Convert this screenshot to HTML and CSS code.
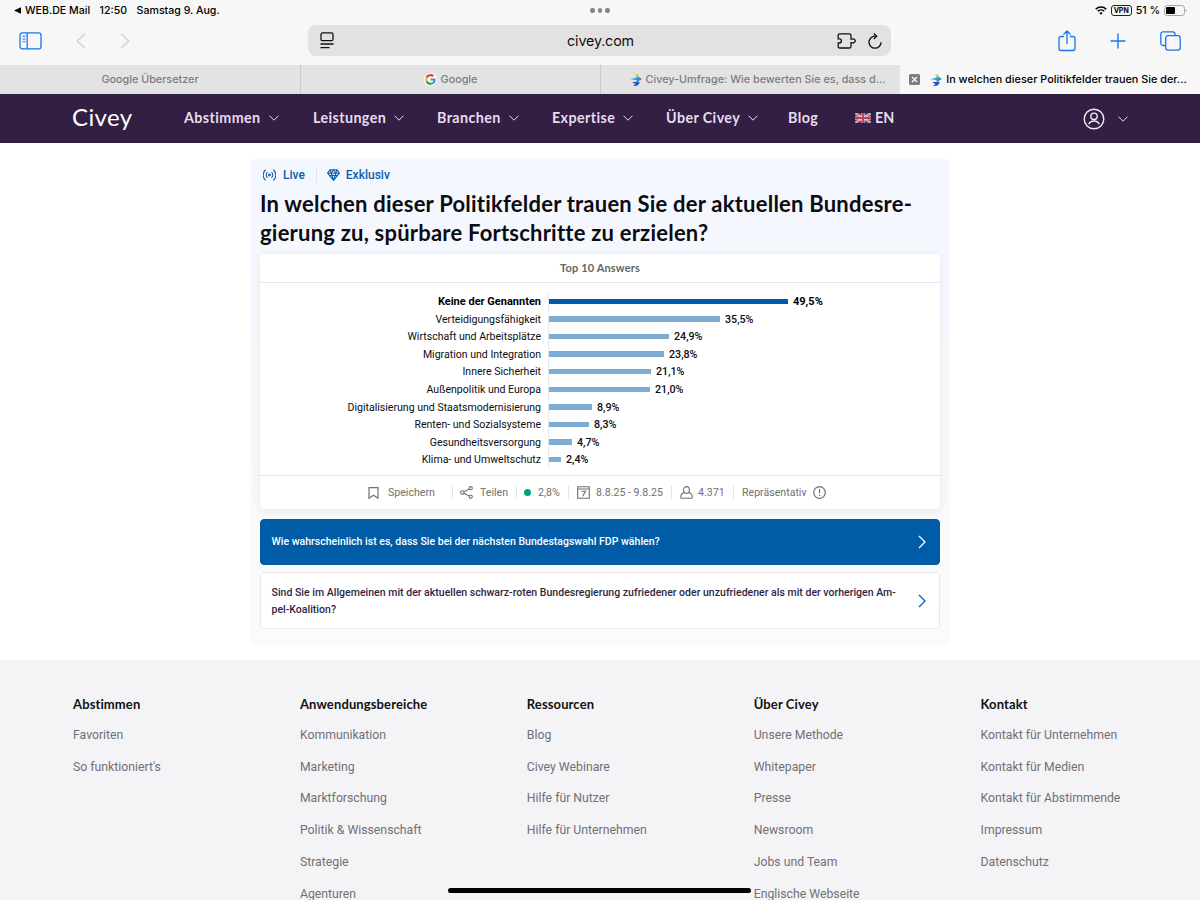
FILE: index.html
```html
<!DOCTYPE html>
<html lang="de">
<head>
    <meta charset="UTF-8">
    <meta name="viewport" content="width=device-width, initial-scale=1.0">
    <title>Civey</title>
    <link rel="stylesheet" href="styles.css">
</head>
<body>
    <svg class="defs" width="0" height="0">
        <defs>
            <linearGradient id="civey-top" x1="0" y1="0" x2="0" y2="1">
                <stop offset="0" stop-color="#f0d54a"/>
                <stop offset="1" stop-color="#6fc3a0"/>
            </linearGradient>
            <linearGradient id="civey-blue" x1="0" y1="0" x2="1" y2="0">
                <stop offset="0" stop-color="#3fc0ee"/>
                <stop offset="1" stop-color="#2a78cf"/>
            </linearGradient>
            <symbol id="chevron" viewBox="0 0 10 6">
                <path d="M.5 .7 5 5.2 9.500 .7" fill="none" stroke="currentColor" stroke-width="1"/>
            </symbol>
            <symbol id="arrow" viewBox="0 0 8 14">
                <path d="M1 1l6 6-6 6" fill="none" stroke="currentColor" stroke-width="1.3"/>
            </symbol>
            <symbol id="civey-icon" viewBox="0 0 12 14">
                <path d="M4.500 .5 8 1.600 9.500 4.300 6 4.600 6.500 2.800z" fill="url(#civey-top)"/>
                <path d="M0 6.300 8.500 4 12 6 7.500 8.700 6 6.900z" fill="url(#civey-blue)"/>
                <path d="M2 9.300 8.500 8.400 9.800 9.800 7.500 12.600 2.600 13.300 5.500 11z" fill="#1c58bb"/>
            </symbol>
        </defs>
    </svg>

    <!-- Browser -->
    <div class="status-bar">
        <div class="status-left">
            <span class="back-app"><svg width="7" height="7" viewBox="0 0 7 7"><path d="M0 3.500 7 .3v6.400z"/></svg>WEB.DE Mail</span>
            <span class="clock">12:50</span>
            <span class="date">Samstag 9. Aug.</span>
        </div>
        <div class="dots"><i></i><i></i><i></i></div>
        <div class="status-right">
            <svg width="12" height="9" viewBox="0 0 12 9" fill="none" stroke="#000" stroke-width="1.600"><path d="M.7 3.200a7.600 7.600 0 0 1 10.600 0M2.700 5.300a4.700 4.700 0 0 1 6.600 0"/><path d="M6 8.700 4.300 7a2.500 2.500 0 0 1 3.400 0z" fill="#000" stroke="none"/></svg>
            <span class="vpn">VPN</span>
            <span class="percent">51 %</span>
            <svg class="battery" width="23" height="11" viewBox="0 0 23 11"><rect x=".5" y=".5" width="20" height="10" rx="2.800" fill="none" stroke="#a5a5a5"/><rect x="2" y="2" width="9" height="7" rx="1.200"/><path d="M21.700 4v3q1-.4 1-1.500t-1-1.500z" fill="#a5a5a5"/></svg>
        </div>
    </div>

    <div class="toolbar">
        <div class="tools-left">
            <svg width="23" height="18" viewBox="0 0 23 18" fill="none" stroke="#1b74e8" stroke-width="1.300"><rect x="1" y=".8" width="21" height="16" rx="2.300"/><path d="M8.200 1v16"/><path d="M3.500 4.300h3M3.500 7h3M3.500 9.700h3" stroke-width="1"/></svg>
            <svg width="10" height="16" viewBox="0 0 10 16" fill="none" stroke="#cfcfcf" stroke-width="1.300"><path d="M9 .8 1.200 8 9 15.200"/></svg>
            <svg width="10" height="16" viewBox="0 0 10 16" fill="none" stroke="#cfcfcf" stroke-width="1.300"><path d="M1 .8 8.800 8 1 15.200"/></svg>
        </div>
        <div class="address">
            <svg width="14" height="17" viewBox="0 0 14 17" fill="none" stroke="#111" stroke-width="1.300"><rect x="1" y=".9" width="12" height="7.800" rx="1.500"/><path d="M.5 12h13M.5 15.600h9"/></svg>
            <span class="url">civey.com</span>
            <div class="address-icons">
                <svg width="19" height="16" viewBox="0 0 19 16" fill="none" stroke="#111" stroke-width="1.300"><path d="M1.200 5.800V2.300Q1.200.8 2.700.8h9.800q1.500 0 1.500 1.500v3.900h1.100a2 2 0 1 1 0 3.400H14v3.900q0 1.500-1.500 1.500H2.700q-1.500 0-1.500-1.500V10h1.100a2 2 0 1 0 0-4.200z"/></svg>
                <svg width="14" height="16" viewBox="0 0 14 16" fill="none" stroke="#111" stroke-width="1.300"><path d="M8.500 3.200H7a6 6 0 1 0 6 6"/><path d="M5.800 .5 8.700 3.200 5.800 6"/></svg>
            </div>
        </div>
        <div class="tools-right">
            <svg width="18" height="22" viewBox="0 0 18 22" fill="none" stroke="#1b74e8" stroke-width="1.300"><path d="M6 6.500H3q-2 0-2 2v10q0 2 2 2h12q2 0 2-2v-10q0-2-2-2h-3M9 14V1.200M5.500 4.500 9 1l3.500 3.500"/></svg>
            <svg width="16" height="16" viewBox="0 0 16 16" fill="none" stroke="#1b74e8" stroke-width="1.400"><path d="M8 .5v15M.5 8h15"/></svg>
            <svg width="21" height="20" viewBox="0 0 21 20" fill="none" stroke="#1b74e8" stroke-width="1.300"><path d="M5.500 14.500H3.200q-2.400 0-2.400-2.400V3.200Q.8.800 3.200.8h9.500q2.400 0 2.400 2.400v1.300"/><rect x="5.700" y="4.700" width="14.500" height="14.500" rx="2.400"/></svg>
        </div>
    </div>

    <div class="tabs">
        <div class="tab">Google Übersetzer</div>
        <div class="tab">
            <svg width="13" height="13" viewBox="-5 -5 58 58"><circle cx="24" cy="24" r="29" fill="#fff"/><path fill="#EA4335" d="M24 9.500c3.500 0 6.700 1.200 9.200 3.600l6.900-6.900C35.900 2.400 30.500 0 24 0 14.600 0 6.500 5.400 2.600 13.200l8 6.200C12.400 13.700 17.700 9.500 24 9.500z"/><path fill="#4285F4" d="M47 24.600c0-1.600-.2-3.100-.4-4.600H24v9h12.900c-.6 3-2.300 5.500-4.700 7.200l7.700 6C44.400 38 47 32 47 24.600z"/><path fill="#FBBC05" d="M10.500 28.600a14.500 14.500 0 0 1 0-9.200l-8-6.200a24 24 0 0 0 0 21.600z"/><path fill="#34A853" d="M24 48c6.500 0 11.900-2.100 15.900-5.800l-7.700-6c-2.200 1.500-4.900 2.300-8.200 2.300-6.300 0-11.600-4.200-13.500-9.900l-8 6.200C6.500 42.600 14.600 48 24 48z"/></svg>
            Google
        </div>
        <div class="tab long">
            <svg width="12" height="14"><use href="#civey-icon"/></svg>
            Civey-Umfrage: Wie bewerten Sie es, dass d...
        </div>
        <div class="tab active">
            <svg class="close" width="11" height="11" viewBox="0 0 11 11"><rect width="11" height="11" rx="1.500" fill="#7d7d7d"/><path d="M3 3l5 5M8 3 3 8" stroke="#fff" stroke-width="1.200"/></svg>
            <svg width="12" height="14"><use href="#civey-icon"/></svg>
            In welchen dieser Politikfelder trauen Sie der...
        </div>
    </div>

    <!-- Navigation -->
    <header class="header">
        <a class="logo">Civey</a>
        <nav class="nav">
            <a>Abstimmen <svg width="10" height="6"><use href="#chevron"/></svg></a>
            <a>Leistungen <svg width="10" height="6"><use href="#chevron"/></svg></a>
            <a>Branchen <svg width="10" height="6"><use href="#chevron"/></svg></a>
            <a>Expertise <svg width="10" height="6"><use href="#chevron"/></svg></a>
            <a>Über Civey <svg width="10" height="6"><use href="#chevron"/></svg></a>
            <a>Blog</a>
            <a class="lang"><svg width="16" height="10" viewBox="0 0 16 10"><rect width="16" height="10" fill="#33427f"/><path d="M0 0 16 10M16 0 0 10" stroke="#eee" stroke-width="2"/><path d="M0 0 16 10M16 0 0 10" stroke="#d3344c" stroke-width=".8"/><path d="M8 0v10M0 5h16" stroke="#eee" stroke-width="3"/><path d="M8 0v10M0 5h16" stroke="#d3344c" stroke-width="1.900"/></svg>EN</a>
        </nav>
        <div class="account">
            <svg width="22" height="22" viewBox="0 0 22 22" fill="none" stroke="#f0e8f5" stroke-width="1.400"><circle cx="11" cy="11" r="9.800"/><circle cx="11" cy="8.300" r="3.200"/><path d="M5.800 16.300c.8-2.200 2.700-3.300 5.200-3.300s4.400 1.100 5.200 3.300"/></svg>
            <svg width="10" height="6"><use href="#chevron"/></svg>
        </div>
    </header>

    <!-- Umfrage -->
    <main class="poll">
        <div class="labels">
            <span class="label live"><svg width="13" height="12" viewBox="0 0 13 12" fill="none" stroke="currentColor" stroke-width="1.100"><circle cx="6.500" cy="6" r=".9"/><path d="M4.500 3.200a3.700 3.700 0 0 0 0 5.600M8.500 3.200a3.700 3.700 0 0 1 0 5.600M2.700.8a6.600 6.600 0 0 0 0 10.400M10.300.8a6.600 6.600 0 0 1 0 10.400"/></svg>Live</span>
            <span class="label exclusive"><svg width="13" height="12" viewBox="0 0 13 12" fill="none" stroke="currentColor" stroke-width="1.100"><path d="M3 .7h7l2.400 3.500-5.900 7.200L.6 4.200zM.6 4.200h11.800M3 .7l1.200 3.500 2.300 7.200 2.300-7.200L10 .7M4.200 4.200 6.500.7l2.300 3.500M2 6.500h9"/></svg>Exklusiv</span>
        </div>
        <h1>In welchen dieser Politikfelder trauen Sie der aktuellen Bundesre-<br>gierung zu, spürbare Fortschritte zu erzielen?</h1>

        <section class="card">
            <h2>Top 10 Answers</h2>
            <div class="chart">
                <div class="row first"><span class="name">Keine der Genannten</span><div class="track"><i style="width: 239px"></i><b>49,5%</b></div></div>
                <div class="row"><span class="name">Verteidigungsfähigkeit</span><div class="track"><i style="width: 171px"></i><b>35,5%</b></div></div>
                <div class="row"><span class="name">Wirtschaft und Arbeitsplätze</span><div class="track"><i style="width: 120px"></i><b>24,9%</b></div></div>
                <div class="row"><span class="name">Migration und Integration</span><div class="track"><i style="width: 115px"></i><b>23,8%</b></div></div>
                <div class="row"><span class="name">Innere Sicherheit</span><div class="track"><i style="width: 102px"></i><b>21,1%</b></div></div>
                <div class="row"><span class="name">Außenpolitik und Europa</span><div class="track"><i style="width: 101px"></i><b>21,0%</b></div></div>
                <div class="row"><span class="name">Digitalisierung und Staatsmodernisierung</span><div class="track"><i style="width: 43px"></i><b>8,9%</b></div></div>
                <div class="row"><span class="name">Renten- und Sozialsysteme</span><div class="track"><i style="width: 40px"></i><b>8,3%</b></div></div>
                <div class="row"><span class="name">Gesundheitsversorgung</span><div class="track"><i style="width: 23px"></i><b>4,7%</b></div></div>
                <div class="row"><span class="name">Klima- und Umweltschutz</span><div class="track"><i style="width: 12px"></i><b>2,4%</b></div></div>
            </div>
            <div class="meta">
                <span class="save"><svg width="11" height="12" viewBox="0 0 11 12" fill="none" stroke="currentColor" stroke-width="1.200"><path d="M1 .7h9v10.500L5.500 8.200 1 11.200z"/></svg>Speichern</span>
                <span class="share"><svg width="13" height="13" viewBox="0 0 13 13" fill="none" stroke="currentColor" stroke-width="1.100"><circle cx="2.300" cy="6.500" r="1.700"/><circle cx="10.700" cy="2.200" r="1.600"/><circle cx="10.700" cy="10.800" r="1.600"/><path d="M3.800 5.700 9.300 3M3.800 7.300l5.500 2.700"/></svg>Teilen</span>
                <span class="error"><i class="dot"></i>2,8%</span>
                <span class="period"><svg width="13" height="13" viewBox="0 0 13 13" fill="none" stroke="currentColor" stroke-width="1.100"><path d="M.7.7h11.600v11.600H.7zM.7 3h11.600M4.500 5.200h4L5.700 10.200"/></svg>8.8.25 - 9.8.25</span>
                <span class="people"><svg width="13" height="13" viewBox="0 0 13 13" fill="none" stroke="currentColor" stroke-width="1.100"><ellipse cx="6.500" cy="4" rx="2.900" ry="3.400"/><path d="M4.200 6.500C1.800 7.400.7 9 .7 11.200q0 1.100 1.100 1.100h9.400q1.100 0 1.100-1.100c0-2.200-1.100-3.800-3.500-4.700"/></svg>4.371</span>
                <span class="rep">Repräsentativ<svg width="13" height="13" viewBox="0 0 13 13" fill="none" stroke="currentColor" stroke-width="1.200"><circle cx="6.500" cy="6.500" r="5.800"/><path d="M6.500 3v4.300M6.500 8.700V10"/></svg></span>
            </div>
        </section>

        <a class="question primary">Wie wahrscheinlich ist es, dass Sie bei der nächsten Bundestagswahl FDP wählen?<svg width="8" height="14"><use href="#arrow"/></svg></a>
        <a class="question">Sind Sie im Allgemeinen mit der aktuellen schwarz-roten Bundesregierung zufriedener oder unzufriedener als mit der vorherigen Am-<br>pel-Koalition?<svg width="8" height="14"><use href="#arrow"/></svg></a>
    </main>

    <footer class="footer">
        <div class="column">
            <h3>Abstimmen</h3>
            <a>Favoriten</a>
            <a>So funktioniert's</a>
        </div>
        <div class="column">
            <h3>Anwendungsbereiche</h3>
            <a>Kommunikation</a>
            <a>Marketing</a>
            <a>Marktforschung</a>
            <a>Politik &amp; Wissenschaft</a>
            <a>Strategie</a>
            <a>Agenturen</a>
        </div>
        <div class="column">
            <h3>Ressourcen</h3>
            <a>Blog</a>
            <a>Civey Webinare</a>
            <a>Hilfe für Nutzer</a>
            <a>Hilfe für Unternehmen</a>
        </div>
        <div class="column">
            <h3>Über Civey</h3>
            <a>Unsere Methode</a>
            <a>Whitepaper</a>
            <a>Presse</a>
            <a>Newsroom</a>
            <a>Jobs und Team</a>
            <a>Englische Webseite</a>
        </div>
        <div class="column">
            <h3>Kontakt</h3>
            <a>Kontakt für Unternehmen</a>
            <a>Kontakt für Medien</a>
            <a>Kontakt für Abstimmende</a>
            <a>Impressum</a>
            <a>Datenschutz</a>
        </div>
    </footer>
    <div class="home-bar"></div>
</body>
</html>
```
FILE: styles.css
```css
* {
    box-sizing: border-box;
}

body {
    margin: 0;
    height: 900px;
    overflow: hidden;
    background: #fff;
    font-family: Roboto, sans-serif;
    color: #0c0c12;
}

svg {
    flex: none;
    display: block;
}

.defs {
    position: absolute;
}

/* Browser */
.status-bar {
    height: 22px;
    display: grid;
    grid-template-columns: 1fr auto 1fr;
    align-items: center;
    padding-bottom: 1px;
    background: #f7f7f7;
    font: 500 10.600px/20px Inter, sans-serif;
    color: #000;
}

.status-left {
    display: flex;
    padding-left: 14px;
    gap: 9.500px;
}

.back-app {
    display: flex;
    align-items: center;
    gap: 4px;
}

.dots {
    display: flex;
    gap: 3px;
}

.dots i {
    width: 4.500px;
    height: 4.500px;
    border-radius: 50%;
    background: #858585;
}

.status-right {
    display: flex;
    align-items: center;
    justify-content: flex-end;
    gap: 4px;
    padding-right: 13px;
}

.vpn {
    width: 21px;
    height: 11px;
    border: 1px solid #222;
    border-radius: 3px;
    font-size: 7px;
    font-weight: 700;
    line-height: 9px;
    text-align: center;
}

.toolbar {
    height: 43px;
    display: grid;
    grid-template-columns: 308px 583px 1fr;
    align-items: start;
    padding-top: 3px;
    background: #f7f7f7;
}

.tools-left {
    height: 31px;
    display: flex;
    align-items: center;
    gap: 34px;
    padding-left: 19px;
}

.address {
    height: 31px;
    display: grid;
    grid-template-columns: 1fr auto 1fr;
    align-items: center;
    padding: 0 9px 0 12px;
    border-radius: 8px;
    background: #e2e2e2;
}

.url {
    font: 400 14.300px/31px Inter, sans-serif;
    letter-spacing: -.15px;
    margin-right: 1px;
    color: #111;
}

.address-icons {
    display: flex;
    justify-content: flex-end;
    gap: 12px;
}

.tools-right {
    height: 31px;
    display: flex;
    align-items: center;
    justify-content: flex-end;
    gap: 34px;
    padding-right: 19px;
}

.tabs {
    height: 29px;
    display: grid;
    grid-template-columns: 301px 300px 299px 300px;
    background: #e3e3e3;
}

.tab {
    display: flex;
    align-items: center;
    justify-content: center;
    gap: 4px;
    border-right: 1px solid #cacaca;
    font: 500 10.800px/29px Inter, sans-serif;
    color: #7c7c7c;
    white-space: nowrap;
}

.tab.long {
    padding-left: 14px;
    border-right: 0;
}

.tab.active {
    padding-right: 4px;
    border-right: 0;
    background: #f7f7f7;
    color: #000;
    letter-spacing: .03px;
}

.close {
    margin-right: 6px;
}

/* Navigation */
.header {
    height: 49px;
    display: flex;
    align-items: center;
    padding: 0 72px;
    background: #321f43;
    font-family: Lato, sans-serif;
    color: #e6dcee;
}

.logo {
    width: 112px;
    padding-bottom: 4px;
    font-size: 24px;
    letter-spacing: .4px;
    color: #fff;
}

.nav {
    display: grid;
    grid-template-columns: 129px 124px 115px 114px 122px 67px auto;
    padding-bottom: 2px;
    font-size: 14.300px;
    font-weight: 700;
    letter-spacing: .4px;
}

.nav a {
    display: flex;
    align-items: center;
    gap: 8px;
}

.nav a.lang {
    gap: 4px;
    letter-spacing: 0;
}

.account {
    display: flex;
    align-items: center;
    gap: 13px;
    margin-left: auto;
}

/* Umfrage */
.poll {
    width: 700px;
    height: 487px;
    margin: 15px auto;
    padding: 9px 10px;
    border-radius: 8px;
    background: linear-gradient(#f3f7fe, #fbfbfb);
}

.labels {
    display: flex;
    font-size: 12px;
    font-weight: 500;
    line-height: 16px;
    color: #0a60ac;
}

.label {
    display: flex;
    align-items: center;
    gap: 7px;
    padding-left: 3px;
}

.exclusive {
    margin-left: 11px;
    padding-left: 10px;
    gap: 6px;
    border-left: 1px solid #dfe4ec;
}

h1 {
    margin: 6px 0 7px;
    font: 700 22px/29px Lato, sans-serif;
    letter-spacing: .22px;
    font-variant-ligatures: none;
    white-space: nowrap;
}

.card {
    height: 255px;
    border-radius: 4px;
    background: #fff;
    box-shadow: 0 2px 8px rgba(40, 60, 90, .09);
}

h2 {
    margin: 0;
    height: 29px;
    border-bottom: 1px solid #e4e8eb;
    font: 700 11px/27px Lato, sans-serif;
    letter-spacing: .15px;
    text-align: center;
    color: #666;
}

.chart {
    height: 193px;
    padding-top: 9px;
    border-bottom: 1px solid #e4e8eb;
}

.row {
    height: 17.600px;
    display: grid;
    grid-template-columns: 281px 1fr;
    column-gap: 7px;
    align-items: center;
    font-size: 10.560px;
    line-height: 17.600px;
}

.name,
.track b {
    padding-top: 1px;
}

.name {
    text-align: right;
}

.track {
    height: 17.600px;
    display: flex;
    align-items: center;
    gap: 5px;
    border-left: 1px solid #e4e8eb;
}

.track i {
    height: 5.500px;
    background: #7eacd2;
}

.track b {
    font-size: 10.700px;
    font-weight: 500;
}

.first .name,
.first b {
    font-size: 11px;
    font-weight: 700;
    color: #000;
}

.first i {
    background: #005ca6;
}

.meta {
    height: 33px;
    display: flex;
    align-items: center;
    padding: 0 0 0 108px;
    font-size: 10.600px;
    color: #707070;
}

.meta span {
    height: 13px;
    display: flex;
    align-items: center;
    gap: 6px;
}

.meta span + span {
    padding-left: 8px;
    border-left: 1px solid #e3e3e3;
}

.meta .save {
    width: 84px;
    gap: 9px;
}

.meta .share {
    width: 64px;
    padding-left: 7px;
    gap: 7px;
}

.meta .error {
    width: 52px;
    padding-left: 7px;
    gap: 7px;
}

.meta .period {
    width: 103px;
}

.meta .people {
    width: 62px;
    gap: 5px;
}

.dot {
    width: 7px;
    height: 7px;
    border-radius: 50%;
    background: #00a083;
}

.question {
    height: 57px;
    margin-top: 7px;
    padding: 0 13px 0 10.500px;
    display: grid;
    grid-template-columns: 1fr 8px;
    align-items: center;
    border: 1px solid #e7e9ec;
    border-radius: 4px;
    background: #fff;
    font-size: 10.540px;
    font-weight: 500;
    line-height: 17px;
    color: #321f43;
    white-space: nowrap;
}

.question svg {
    color: #0a60ac;
}

.question.primary {
    height: 46px;
    margin-top: 10px;
    border-color: #005ca6;
    background: #005ca6;
    line-height: 18px;
    color: #fff;
}

.question.primary svg {
    color: #fff;
}

/* Footer */
.footer {
    height: 240px;
    display: grid;
    grid-template-columns: repeat(5, 226.900px);
    padding: 36px 0 0 73px;
    background: #f4f4f7;
    overflow: hidden;
}

.column h3 {
    margin: 0 0 8px;
    font: 700 13px/16px Lato, sans-serif;
    letter-spacing: .12px;
    color: #111;
}

.column a {
    display: block;
    font-size: 12.260px;
    line-height: 31.700px;
    color: #707075;
}

.home-bar {
    position: absolute;
    left: 448px;
    bottom: 7px;
    width: 303px;
    height: 5px;
    border-radius: 3px;
    background: #000;
}
```
